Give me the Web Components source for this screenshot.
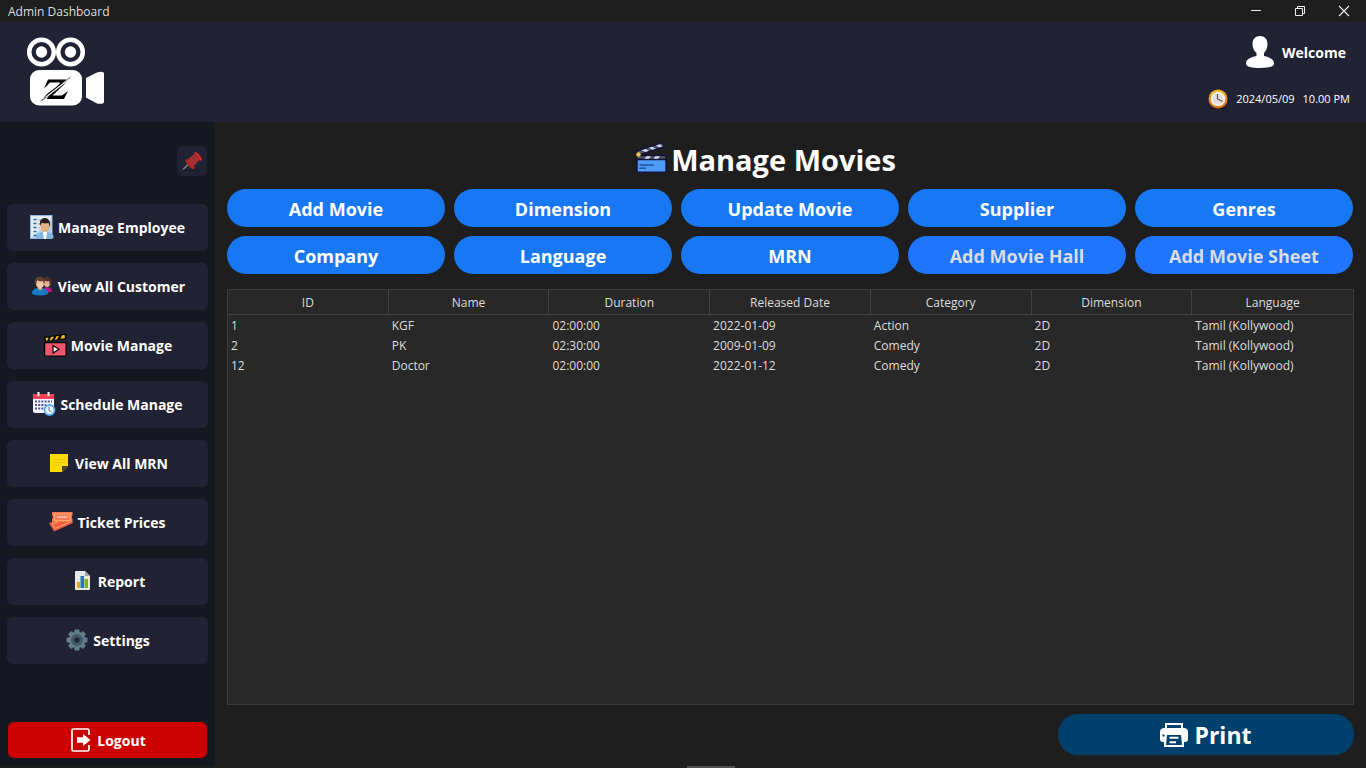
<!DOCTYPE html>
<html lang="en">
<head>
<meta charset="utf-8">
<title>Admin Dashboard</title>
<style>
  html, body { margin: 0; background: #1e1e1e; }
  body { font-family: "Open Sans", "Noto Sans", sans-serif; font-size: 12px; color: #dddddd; }
</style>
</head>
<body>
<admin-app></admin-app>
<script>
const ICONS = {
  logo: `<svg viewBox="0 -1 80 70" width="80" height="70">
    <g fill="none" stroke="#fff" stroke-width="4.5"><circle cx="15.5" cy="15" r="12.3"/><circle cx="44.5" cy="15" r="12.3"/></g>
    <g fill="#fff"><circle cx="15.5" cy="15" r="5.7"/><circle cx="44.5" cy="15" r="5.7"/>
    <rect x="4" y="33" width="52" height="35.500" rx="9"/>
    <path d="M60 41L71 35.500Q78 33.500 78 37V65Q78 67.500 71 66.500L60 60.500Z"/></g>
    <path d="M22 42.500H40.500L26.500 58.500H36L42 54L38 62H20.500L34.500 45.500H24L18 51.500Z" fill="#000"/>
    <path d="M15 64L21 57L34 47L27 57Z" fill="#000"/>
    <path d="M44.500 40.500L38 47.500L27 58L32 50Z" fill="#000"/>
    <path d="M17 62.500L43 42" stroke="#fff" stroke-width="1.200"/>
    <path d="M15 64.500L20 60M39 44.500L44.500 40" stroke="#777" stroke-width="1"/></svg>`,
  user: `<svg viewBox="0 0 28 32" width="28" height="32"><path d="M14 0C18.500 0 21.500 3 21.500 8C21.500 12 20 15 18 17V20C23 21 28 23 28 27.500C28 31 22 32 14 32S0 31 0 27.500C0 23 5 21 10.500 20V17C8 15 6.500 12 6.500 8C6.500 3 9.500 0 14 0Z" fill="#fff"/></svg>`,
  clock: `<svg viewBox="0 0 20 20" width="20" height="20"><defs><linearGradient id="g" x2="0" y2="1"><stop stop-color="#f6b91c"/><stop offset="1" stop-color="#e06c0c"/></linearGradient></defs><path d="M2 19.500H18" stroke="#111522" stroke-width="1"/><circle cx="10" cy="10" r="9.500" fill="url(#g)"/><circle cx="10" cy="10" r="7.300" fill="#f4f2ee"/><circle cx="10" cy="10" r="5.500" fill="#e0dfdc"/><path d="M9.500 5V10L14.500 12.500" fill="none" stroke="#555" stroke-width="1.200"/></svg>`,
  pin: `<svg viewBox="0 0 20 20" width="20" height="20"><path d="M1 19.500H18" stroke="#141622"/><path d="M1 18.500L8 11.500" stroke="#777a80" stroke-width="1.700"/><path d="M3 9L5 8L13 16.500L11 18.500C8 17 5 13 3 9Z" fill="#b52420"/><path d="M4.500 9.500L12.500 2.500L18 8.500L10.500 16.500Z" fill="#a82c2c"/><path d="M12 1L13 .5C16 2 19 5 20 8.500L18.500 10Z" fill="#d62b26"/><path d="M7 8L13 14M9 6L15 12M11 4L16.500 9.500" stroke="#71404a" stroke-width=".7"/></svg>`,
  employee: `<svg viewBox="0 0 24 24" width="24" height="24"><rect x=".5" y=".5" width="21.500" height="23" fill="#e2eaf2" stroke="#8fb7df"/><path d="M1 23L22 4V23Z" fill="#b4cfea"/><path d="M3.500 4.500h3M3.500 8.500h3M3.500 12.500h3M3.500 16.500h3M3.500 20.500h3" stroke="#29679c" stroke-width="1.600"/><path d="M8 5h3M8 9h3M8 13h2" stroke="#91aabd"/><path d="M6 24C6 19 9 17.500 12 17H18C22 18 24 20 23.500 23L20 24Z" fill="#81b6df"/><path d="M13 17H17L16 24H14Z" fill="#fff"/><ellipse cx="15" cy="11.500" rx="4.500" ry="5.500" fill="#e4b27f"/><path d="M10 11C9 5 12 3 15 3S21 6 20 12L18.500 8Q14 9 12 7.500Z" fill="#2b2020"/></svg>`,
  customer: `<svg viewBox="0 0 24 24" width="24" height="24"><path d="M11 18C12 13.500 15 13 19 13.500C21 14 22 15.500 22 17.500Q17 19 11 18Z" fill="#b9178a"/><ellipse cx="17" cy="8.500" rx="3.500" ry="4.700" fill="#e3b28e"/><path d="M13 7C13 2 21 2 21.500 7L21 13Q19.500 11 19 7Q16 8 14 6Z" fill="#51302a"/><path d="M2 20C2 15 5 14 10 14S18 16 18 20Q10 23 2 20Z" fill="#1679c2"/><path d="M8 13H12V15.500Q10 17 8 15Z" fill="#dda982"/><ellipse cx="10" cy="9.500" rx="4" ry="5" fill="#f0c5a1"/><path d="M5 9C4 1 15 1 15 8L14 10L13 7Q9 8 7 6L6 11Z" fill="#65402f"/></svg>`,
  movie: `<svg viewBox="0 0 24 24" width="24" height="24"><path d="M1 4L23 .5L23.500 6L2 9Z" fill="#080808"/><path d="M2.500 5L5.500 4.500L4.500 7.500L3.500 8ZM8 4L11 3.500L8.500 7.300L6.500 7.500ZM13.500 3.200L16 2.800L14 6.500L11.500 6.800ZM19 2.300L21.500 2L22 5L17.500 6Z" fill="#f8be18"/><rect x="1.600" y="9.600" width="21.500" height="13.500" rx="1" fill="#f0576f" stroke="#080808" stroke-width="1.300"/><path d="M10 12.500L16 16.200L10 20Z" fill="#ffeef0" stroke="#101010" stroke-width="1.300"/></svg>`,
  schedule: `<svg viewBox="0 0 24 24" width="24" height="24"><rect x="1" y="2" width="21" height="19" rx="2" fill="#f4f5ff"/><path d="M1 7V3.500Q1 2 3 2H20Q22 2 22 3.500V7Z" fill="#f43f55"/><path d="M6.500 0V4M16.500 0V4" stroke="#fff" stroke-width="2"/><path d="M3 9.500H20M3 13H14M3 16.500H12" stroke="#4c579c" stroke-width="2" stroke-dasharray="2 1.200"/><circle cx="17.500" cy="18" r="5" fill="#e9f4ff" stroke="#50aaf4" stroke-width="1.800"/><path d="M17 15V18.500L19.500 20" fill="none" stroke="#777"/></svg>`,
  note: `<svg viewBox="0 0 24 24" width="24" height="24"><path d="M3 3H21V15L15 21H3Z" fill="#fedb06"/><path d="M6 8.500H18M6 11.500H18M6 14.500H12" stroke="#ebc515"/><path d="M15 15H21L15 21Z" fill="#494731"/></svg>`,
  ticket: `<svg viewBox="0 0 24 24" width="24" height="24"><path d="M0 13L20 6L24 13L5 21.500Z" fill="#f25a45"/><path d="M3 14L19 8L21 12L6 18.500Z" fill="none" stroke="#ffb15b"/><path d="M3 2H23.500V5L22.500 7L23.500 9V12H3V9L4 7L3 5Z" fill="#ff7658"/><rect x="5.500" y="4" width="15.500" height="6.500" fill="#ff7658" stroke="#ffb154"/><path d="M8 7.200H18.500" stroke="#ffe0cc" stroke-width="1.700" stroke-dasharray="1.200 .5"/></svg>`,
  report: `<svg viewBox="0 0 24 24" width="24" height="24"><path d="M6 2H15L20 7V20Q20 21 19 21H6Q5 21 5 20V3Q5 2 6 2Z" fill="#e8e8e6"/><path d="M15 2V7H20Z" fill="#a3a4a4"/><rect x="7" y="13" width="3" height="6" fill="#eea21c"/><rect x="10.500" y="7" width="3.500" height="12" fill="#1679bd"/><rect x="14.500" y="10" width="3.500" height="9" fill="#77b51c"/></svg>`,
  settings: `<svg viewBox="0 0 24 24" width="24" height="24"><g fill="#607d8b"><circle cx="12" cy="12" r="8.300"/><rect x="9.500" y="1.500" width="5" height="21" rx="1"/><rect x="9.500" y="1.500" width="5" height="21" rx="1" transform="rotate(45 12 12)"/><rect x="9.500" y="1.500" width="5" height="21" rx="1" transform="rotate(90 12 12)"/><rect x="9.500" y="1.500" width="5" height="21" rx="1" transform="rotate(135 12 12)"/></g><circle cx="12" cy="12" r="6" fill="#455a64"/><circle cx="12" cy="12" r="2.700" fill="#20283a"/></svg>`,
  logout: `<svg viewBox="0 0 24 24" width="24" height="24"><path d="M20 7V2.500Q20 1 18.500 1H4.500Q3 1 3 2.500V21.500Q3 23 4.500 23H18.500Q20 23 20 21.500V17" fill="none" stroke="#fff" stroke-width="1.700"/><path d="M8 9.300H14V6L21.500 12L14 18V14.700H8Z" fill="#fff"/></svg>`,
  clapper: `<svg viewBox="0 0 32 32" width="32" height="32"><g stroke="#14123f" stroke-width="1.400" stroke-linejoin="round"><path d="M1.500 10L27.500 1.500L29.500 5.500L4 14Z" fill="#55585a"/><path d="M2 14.500H31V18.500H2Z" fill="#55585a"/><path d="M2 18.500H31V30Q31 31.200 29.500 31.200H3.500Q2 31.200 2 30Z" fill="#4d9cf8"/></g><path d="M6.500 9.200L10.500 7.900L14 9.800L10.500 11ZM14 6.700L17 5.700L20.500 7.700L17.500 8.700ZM21 4.400L24.500 3.200L27.500 5.300L24.500 6.400ZM11.500 15.200H16L14 17.800H9.500ZM20.500 15.200H25L23 17.800H18.500Z" fill="#cbd9ff"/><circle cx="3.500" cy="13.500" r="2.200" fill="#ffc34b"/><path d="M4.500 24H19M4.500 27.200H11" stroke="#23539b" stroke-width="1.600"/></svg>`,
  print: `<svg viewBox="0 0 28 24" width="28" height="24"><path d="M5 0H23V6H5Z" fill="#fff"/><path d="M7 2H21V5H7Z" fill="#00406d"/><path d="M3 5H25Q28 6 28 9V16Q28 19 25 19H24V24H4V19H3Q0 19 0 16V9Q0 6 3 5Z" fill="#fff"/><path d="M7 12H21L22 22H6Z" fill="#00406d"/><path d="M9.500 14.700H18.500M9.500 19.200H16" stroke="#fff" stroke-width="2"/><rect x="2.500" y="11.500" width="2" height="2" fill="#00406d"/></svg>`,
  min: `<svg viewBox="0 0 12 12" width="12" height="12"><path d="M1 5.500H11" stroke="#eee"/></svg>`,
  restore: `<svg viewBox="0 0 12 12" width="12" height="12"><path d="M1.500 3.500H8.500V10.500H1.500ZM3.500 3.500V1.500H10.500V8.500H8.500" fill="none" stroke="#eee"/></svg>`,
  close: `<svg viewBox="0 0 12 12" width="12" height="12"><path d="M1 1L11 11M11 1L1 11" stroke="#eee" stroke-width="1.100"/></svg>`
};

const RESET = `*{box-sizing:border-box} button{font:inherit;color:inherit;border:0;margin:0;padding:0;background:none;cursor:pointer} svg{display:block}`;

class BaseElement extends HTMLElement {
  constructor() {
    super();
    this.attachShadow({ mode: "open" });
  }
  connectedCallback() {
    this.shadowRoot.innerHTML = `<style>${RESET}${this.styles()}</style>${this.markup()}`;
  }
}

class UiIcon extends BaseElement {
  styles() { return `:host{display:block;flex:none}`; }
  markup() { return ICONS[this.getAttribute("name")]; }
}

class TitleBar extends BaseElement {
  styles() { return `
    :host{display:flex;align-items:center;justify-content:space-between;height:22px;padding-left:8px;background:#1e1e1e}
    .controls{display:flex;height:100%}
    button{width:44px;display:flex;align-items:center;justify-content:center}`; }
  markup() { return `<span><slot></slot></span>
    <div class="controls">
      <button aria-label="Minimize"><ui-icon name="min"></ui-icon></button>
      <button aria-label="Restore"><ui-icon name="restore"></ui-icon></button>
      <button aria-label="Close"><ui-icon name="close"></ui-icon></button>
    </div>`; }
}

class AppHeader extends BaseElement {
  styles() { return `
    :host{display:flex;justify-content:space-between;box-sizing:border-box;height:100px;padding:14px 16px 13px 26px;background:#212334;color:#fff}
    .side{display:flex;flex-direction:column;justify-content:space-between;align-items:flex-end}
    .user,.time{display:flex;align-items:center;gap:8px}
    .user{padding-right:4px;font-size:14px;font-weight:700}
    .time{font-size:11px;line-height:16px}`; }
  markup() { return `<ui-icon name="logo"></ui-icon>
    <div class="side">
      <div class="user"><ui-icon name="user"></ui-icon><span>Welcome</span></div>
      <div class="time"><ui-icon name="clock"></ui-icon><time>2024/05/09</time><time>10.00 PM</time></div>
    </div>`; }
}

class NavButton extends BaseElement {
  styles() { return `
    :host{display:block}
    button{display:flex;align-items:center;justify-content:center;gap:4px;width:100%;height:47px;border-radius:6px;background:#212334;color:#fff;font-size:14px;font-weight:700}
    ui-icon{margin-bottom:2px}
    :host([kind=danger]) ui-icon{margin-bottom:0}
    :host([kind=danger]) button{height:36px;background:#cc0000}`; }
  markup() { return `<button><ui-icon name="${this.getAttribute("icon")}"></ui-icon><span><slot></slot></span></button>`; }
}

class SideBar extends BaseElement {
  styles() { return `
    :host{display:flex;flex-direction:column;box-sizing:border-box;width:215px;flex:none;padding:24px 7px 8px;background:#151820}
    .pin{align-self:flex-end;display:flex;align-items:center;justify-content:center;width:30px;height:30px;margin-right:1px;border-radius:6px;background:#212334}
    nav{display:flex;flex-direction:column;gap:12px;margin-top:28px}
    .exit{margin:auto 1px 0}`; }
  markup() { return `<button class="pin" aria-label="Pin sidebar"><ui-icon name="pin"></ui-icon></button>
    <nav>
      <nav-button icon="employee">Manage Employee</nav-button>
      <nav-button icon="customer">View All Customer</nav-button>
      <nav-button icon="movie">Movie Manage</nav-button>
      <nav-button icon="schedule">Schedule Manage</nav-button>
      <nav-button icon="note">View All MRN</nav-button>
      <nav-button icon="ticket">Ticket Prices</nav-button>
      <nav-button icon="report">Report</nav-button>
      <nav-button icon="settings">Settings</nav-button>
    </nav>
    <nav-button class="exit" kind="danger" icon="logout">Logout</nav-button>`; }
}

class PillButton extends BaseElement {
  styles() { return `
    :host{display:block}
    button{display:flex;align-items:center;justify-content:center;gap:6px;width:100%;height:38px;padding-top:2px;border-radius:20px;background:#1877f2;color:#fff;font-size:18px;font-weight:700}
    button:disabled{background:#1f75fe;color:#d9dce3}
    :host([kind=print]) button{height:41px;padding-top:0;background:#00406d;font-size:23px}`; }
  markup() {
    const icon = this.getAttribute("icon");
    return `<button ${this.hasAttribute("disabled") ? "disabled" : ""}>${icon ? `<ui-icon name="${icon}"></ui-icon>` : ""}<span><slot></slot></span></button>`;
  }
}

class MovieTable extends BaseElement {
  styles() { return `
    :host{display:block;background:#282828;border:1px solid #3a3a3a}
    table{width:100%;border-collapse:separate;border-spacing:0;table-layout:fixed}
    th{height:25px;padding:0;font-weight:400;border-bottom:1px solid #424242;text-align:center}
    th:not(:last-child){border-right:1px solid #424242}
    td{height:20px;padding:0 3px;line-height:18px}
    tbody::before{content:"";display:block;height:1px}`; }
  markup() {
    const cols = ["ID", "Name", "Duration", "Released Date", "Category", "Dimension", "Language"];
    const rows = [
      ["1", "KGF", "02:00:00", "2022-01-09", "Action", "2D", "Tamil (Kollywood)"],
      ["2", "PK", "02:30:00", "2009-01-09", "Comedy", "2D", "Tamil (Kollywood)"],
      ["12", "Doctor", "02:00:00", "2022-01-12", "Comedy", "2D", "Tamil (Kollywood)"]
    ];
    return `<table><thead><tr>${cols.map(c => `<th scope="col">${c}</th>`).join("")}</tr></thead>
      <tbody>${rows.map(r => `<tr>${r.map(c => `<td>${c}</td>`).join("")}</tr>`).join("")}</tbody></table>`;
  }
}

class MoviePanel extends BaseElement {
  styles() { return `
    :host{display:flex;flex-direction:column;flex:1;min-width:0;padding:19px 12px 11px}
    h1{display:flex;align-items:center;justify-content:center;gap:4px;height:38px;margin:0 0 10px;padding-right:50px;color:#fff;font-size:29px;line-height:38px;font-weight:700}
    h1 ui-icon{align-self:flex-start}
    .actions{display:grid;grid-template-columns:repeat(5,1fr);gap:9px;padding-right:1px}
    movie-table{flex:1;margin:15px 0 9px}
    .print{align-self:flex-end;width:296px}`; }
  markup() { return `<h1><ui-icon name="clapper"></ui-icon><span>Manage Movies</span></h1>
    <div class="actions">
      <pill-button>Add Movie</pill-button>
      <pill-button>Dimension</pill-button>
      <pill-button>Update Movie</pill-button>
      <pill-button>Supplier</pill-button>
      <pill-button>Genres</pill-button>
      <pill-button>Company</pill-button>
      <pill-button>Language</pill-button>
      <pill-button>MRN</pill-button>
      <pill-button disabled>Add Movie Hall</pill-button>
      <pill-button disabled>Add Movie Sheet</pill-button>
    </div>
    <movie-table></movie-table>
    <pill-button class="print" kind="print" icon="print">Print</pill-button>`; }
}

class AdminApp extends BaseElement {
  styles() { return `
    :host{display:flex;flex-direction:column;min-height:100vh;background:#1e1e1e}
    .body{display:flex;flex:1}
    footer{display:flex;justify-content:center;height:2px;padding-left:56px;background:#1e1e1e}
    footer i{width:48px;background:#505050}`; }
  markup() { return `<title-bar>Admin Dashboard</title-bar>
    <app-header></app-header>
    <div class="body"><side-bar></side-bar><movie-panel></movie-panel></div>
    <footer><i></i></footer>`; }
}

customElements.define("ui-icon", UiIcon);
customElements.define("title-bar", TitleBar);
customElements.define("app-header", AppHeader);
customElements.define("nav-button", NavButton);
customElements.define("side-bar", SideBar);
customElements.define("pill-button", PillButton);
customElements.define("movie-table", MovieTable);
customElements.define("movie-panel", MoviePanel);
customElements.define("admin-app", AdminApp);
</script>
</body>
</html>
